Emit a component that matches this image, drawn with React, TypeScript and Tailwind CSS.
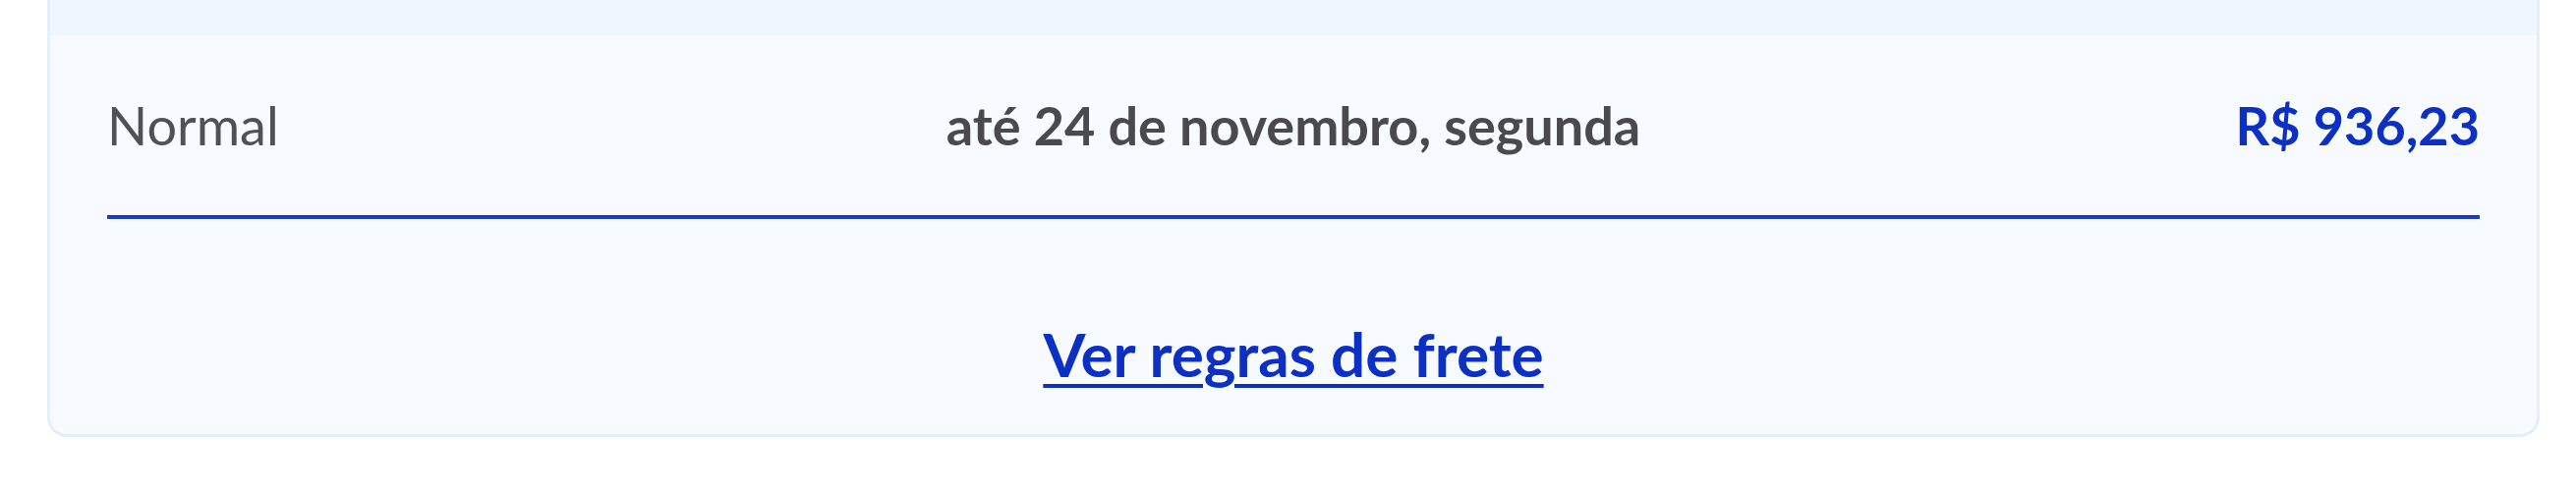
export default function App() {
    return (
        <div className="h-[500px] bg-white pl-[48px] pr-[37px] font-['Lato',sans-serif]">
            {/* Card */}
            <div className="overflow-hidden rounded-b-[20px] border-[3px] border-t-0 border-[#e4effd] bg-[#f7fbff]">
                {/* previous row edge */}
                <div className="h-[36px] bg-[#eef6ff]" />

                <div className="px-[58px]">
                    {/* Shipping option */}
                    <div className="grid h-[187px] grid-cols-[1fr_auto_1fr] items-center border-b-[4px] border-[#1a3dcc]">
                        <span className="text-[54px] leading-none text-[#505158]">
                            Normal
                        </span>
                        <span className="text-[54px] font-bold leading-none text-[#4a4a4d]">
                            até 24 de novembro, segunda
                        </span>
                        <span className="text-right text-[54px] font-bold leading-none text-[#0c2fc4]">
                            R$ 936,23
                        </span>
                    </div>

                    {/* Rules link */}
                    <div className="flex h-[219px] justify-center pt-[106px]">
                        <a
                            href="#"
                            className="text-[62px] font-bold leading-none text-[#0c2fc4] underline decoration-[4px] underline-offset-[7px]"
                        >
                            Ver regras de frete
                        </a>
                    </div>
                </div>
            </div>
        </div>
    );
}
